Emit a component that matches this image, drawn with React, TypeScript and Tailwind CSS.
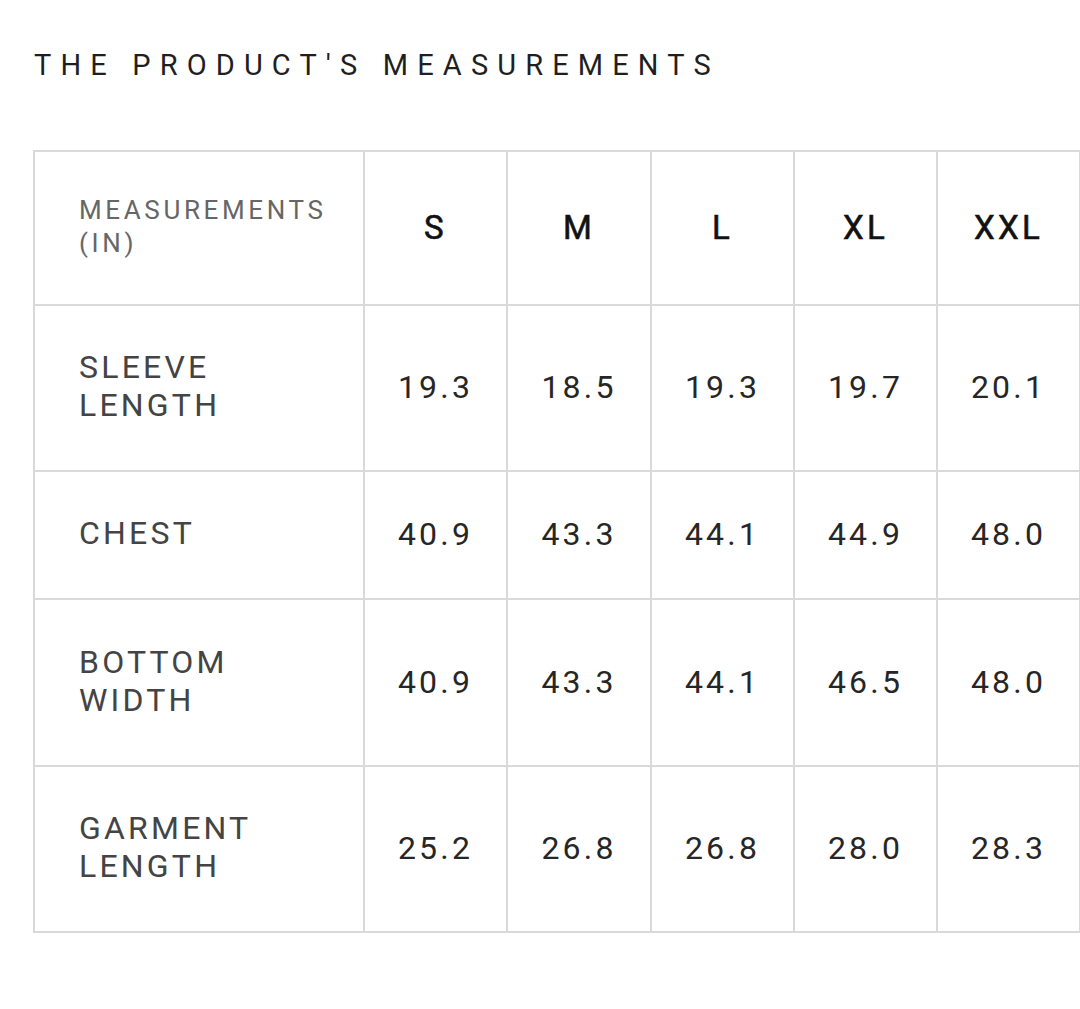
const sizes = ['S', 'M', 'L', 'XL', 'XXL'];

const rows: { label: string[]; values: string[]; h: string }[] = [
  { label: ['SLEEVE', 'LENGTH'], values: ['19.3', '18.5', '19.3', '19.7', '20.1'], h: 'h-[166px]' },
  { label: ['CHEST'], values: ['40.9', '43.3', '44.1', '44.9', '48.0'], h: 'h-[128px]' },
  { label: ['BOTTOM', 'WIDTH'], values: ['40.9', '43.3', '44.1', '46.5', '48.0'], h: 'h-[167px]' },
  { label: ['GARMENT', 'LENGTH'], values: ['25.2', '26.8', '26.8', '28.0', '28.3'], h: 'h-[166px]' },
];

const cell = 'border-r-2 border-b-2 border-[#d9d9d9] flex items-center';

export default function App() {
  return (
    <div
      className="w-[1080px] h-[1009px] bg-white overflow-hidden pl-[34px] pt-[48px]"
      style={{ fontFamily: 'Roboto, "Liberation Sans", sans-serif' }}
    >
      <h1 className="text-[29px] leading-[34px] tracking-[0.315em] text-[#1f1f1f] font-normal">
        THE PRODUCT&apos;S MEASUREMENTS
      </h1>

      <div className="mt-[68px] -ml-px w-[1049px] grid grid-cols-[330px_143px_144px_143px_143px_143px] border-l-2 border-t-2 border-[#d9d9d9]">
        {/* header row */}
        <div className={`${cell} h-[154px] pl-[44px]`}>
          <div className="text-[26px] leading-[33px] tracking-[0.14em] text-[#666] pb-[2px]">
            MEASUREMENTS
            <br />
            (IN)
          </div>
        </div>
        {sizes.map((s) => (
          <div key={s} className={`${cell} h-[154px] justify-center`}>
            <span className="text-[33px] font-normal [-webkit-text-stroke:0.6px_#111] tracking-[0.1em] text-[#111]">{s}</span>
          </div>
        ))}

        {rows.map((r) => (
          <>
            <div key={r.label.join()} className={`${cell} ${r.h} pl-[44px]`}>
              <div className="text-[32px] leading-[38px] tracking-[0.1em] text-[#444] pb-[4px]">
                {r.label.map((l, i) => (
                  <div key={i}>{l}</div>
                ))}
              </div>
            </div>
            {r.values.map((v, i) => (
              <div key={r.label.join() + i} className={`${cell} ${r.h} justify-center`}>
                <span className="text-[32px] tracking-[0.1em] text-[#262626] pb-[2px]">{v}</span>
              </div>
            ))}
          </>
        ))}
      </div>
    </div>
  );
}
